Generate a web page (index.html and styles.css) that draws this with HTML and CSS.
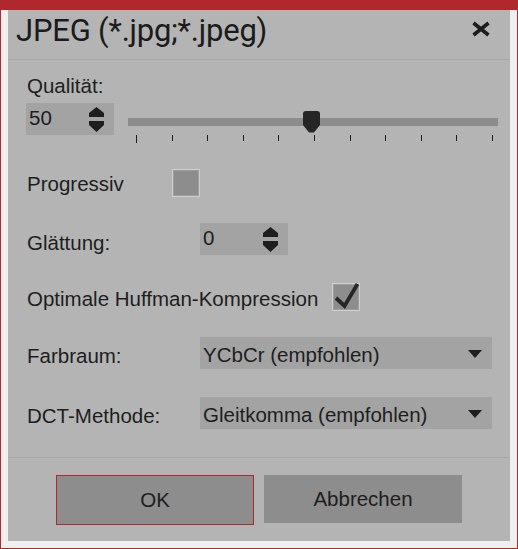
FILE: index.html
```html
<!DOCTYPE html>
<html lang="de">
<head>
<meta charset="utf-8">
<title>JPEG</title>
<link rel="stylesheet" href="styles.css">
</head>
<body>
<div class="window">
  <div class="panel">
    <div class="titlebar">
      <span class="title">JPEG (*.jpg;*.jpeg)</span>
      <svg class="close" width="20" height="16" viewBox="0 0 20 16"><path d="M2.5 2 L17.5 14 M17.5 2 L2.5 14" stroke="#1c1c1c" stroke-width="3.6" stroke-linecap="butt"/></svg>
    </div>
    <div class="content">
      <div class="label q-label">Qualität:</div>
      <div class="slider-row">
        <div class="spinner spin-q">
          <span class="value">50</span>
          <svg class="arrows" width="15" height="25" viewBox="0 0 15 25"><path d="M7.5 0 L15 6 V10 H0 V6 Z M0 14 H15 V18 L7.5 25 L0 18 Z" fill="#1e1e1e"/></svg>
        </div>
        <div class="slider">
          <div class="track"></div>
          <svg class="thumb" width="17" height="22" viewBox="0 0 17 22"><path d="M0 3 Q0 0 3 0 H14 Q17 0 17 3 V14 L11 21.5 H6 L0 14 Z" fill="#262626"/></svg>
          <div class="ticks"><i class="first"></i><i></i><i></i><i></i><i></i><i></i><i></i><i></i><i></i><i></i><i></i></div>
        </div>
      </div>
      <div class="row row-prog">
        <span class="label lw-prog">Progressiv</span>
        <span class="checkbox"></span>
      </div>
      <div class="row row-glatt">
        <span class="label lw-wide">Glättung:</span>
        <div class="spinner spin-g">
          <span class="value">0</span>
          <svg class="arrows" width="15" height="25" viewBox="0 0 15 25"><path d="M7.5 0 L15 6 V10 H0 V6 Z M0 14 H15 V18 L7.5 25 L0 18 Z" fill="#1e1e1e"/></svg>
        </div>
      </div>
      <div class="row row-huff">
        <span class="label lw-huff">Optimale Huffman-Kompression</span>
        <span class="checkbox checked"><svg class="check" width="28" height="28" viewBox="0 0 28 28"><path d="M4 15 L12.5 23 L25.5 1" fill="none" stroke="#262626" stroke-width="3.8"/></svg></span>
      </div>
      <div class="row row-farb">
        <span class="label lw-wide">Farbraum:</span>
        <div class="dropdown">
          <span class="dd-text">YCbCr (empfohlen)</span>
          <svg class="dd-arrow" width="14" height="8" viewBox="0 0 14 8"><path d="M0 0 H14 L7 8 Z" fill="#1e1e1e"/></svg>
        </div>
      </div>
      <div class="row row-dct">
        <span class="label lw-wide">DCT-Methode:</span>
        <div class="dropdown">
          <span class="dd-text">Gleitkomma (empfohlen)</span>
          <svg class="dd-arrow" width="14" height="8" viewBox="0 0 14 8"><path d="M0 0 H14 L7 8 Z" fill="#1e1e1e"/></svg>
        </div>
      </div>
    </div>
    <div class="footer">
      <button class="btn btn-ok">OK</button>
      <button class="btn btn-cancel">Abbrechen</button>
    </div>
  </div>
</div>
</body>
</html>
```
FILE: styles.css
```css
html, body {
  margin: 0;
  padding: 0;
  background: #efefef;
}

.window {
  box-sizing: border-box;
  width: 518px;
  height: 549px;
  border: 1px solid #b0282b;
  border-top: 10px solid #b0282b;
  background: #efefef;
  padding: 0 7px 7px 7px;
}

.panel {
  height: 531px;
  background: #b4b4b4;
  display: flex;
  flex-direction: column;
  font-family: "Liberation Sans", Arial, sans-serif;
  font-size: 20.5px;
  color: #1e1e1e;
}

.titlebar {
  box-sizing: border-box;
  height: 50px;
  border-bottom: 1px solid #a7a7a7;
  display: flex;
  justify-content: space-between;
  align-items: flex-start;
  padding-left: 8px;
  padding-right: 19px;
}

.title {
  font-family: Roboto, "Open Sans", sans-serif;
  font-size: 31px;
  letter-spacing: -0.2px;
  line-height: 40px;
  padding-top: 1px;
  color: #1b1b1b;
  white-space: nowrap;
}

.close {
  display: block;
  margin-top: 11px;
}

.content {
  padding-left: 19px;
  display: flex;
  flex-direction: column;
  align-items: flex-start;
}

.label {
  display: block;
  line-height: 24px;
  white-space: nowrap;
}

.q-label {
  margin-top: 14px;
}

.slider-row {
  display: flex;
  align-items: flex-start;
  margin-top: 5px;
  height: 40px;
}

.spinner {
  box-sizing: border-box;
  width: 88px;
  height: 32px;
  background: #a3a3a3;
  display: flex;
  align-items: flex-start;
  justify-content: space-between;
  padding-left: 3px;
  padding-right: 10px;
}

.spin-q {
  margin-left: -1px;
}

.spinner .value {
  line-height: 30px;
}

.spinner .arrows {
  display: block;
  margin-top: 4px;
}

.slider {
  position: relative;
  width: 370px;
  height: 40px;
  margin-left: 14px;
  display: flex;
  flex-direction: column;
}

.track {
  margin-top: 15px;
  height: 8px;
  background: #8c8c8c;
}

.thumb {
  position: absolute;
  top: 8px;
  left: 175px;
  display: block;
}

.ticks {
  margin-top: 9px;
  margin-left: 8px;
  width: 357px;
  display: flex;
  justify-content: space-between;
  align-items: flex-start;
}

.ticks i {
  display: block;
  width: 1px;
  height: 6px;
  background: #1e1e1e;
}

.ticks i.first {
  height: 8px;
}

.row {
  display: flex;
  align-items: flex-start;
}

.row-prog {
  margin-top: 26px;
}

.row-prog .label {
  padding-top: 3px;
}

.row-glatt {
  margin-top: 26px;
}

.row-glatt .label {
  padding-top: 8px;
}

.row-huff {
  margin-top: 28px;
}

.row-huff .label {
  padding-top: 4px;
}

.row-farb {
  margin-top: 26px;
}

.row-dct {
  margin-top: 28px;
}

.row-farb .label,
.row-dct .label {
  padding-top: 7px;
}

.lw-prog {
  width: 145px;
}

.lw-wide {
  width: 173px;
}

.lw-huff {
  width: 305px;
}

.checkbox {
  box-sizing: border-box;
  display: block;
  width: 28px;
  height: 28px;
  border: 1px solid #cfcfcf;
  box-shadow: inset 0 0 0 1px #9c9c9c;
  background: #8d8d8d;
  position: relative;
}

.check {
  position: absolute;
  left: -1px;
  top: -1px;
  overflow: visible;
}

.dropdown {
  box-sizing: border-box;
  width: 292px;
  height: 32px;
  background: #a3a3a3;
  display: flex;
  justify-content: space-between;
  align-items: flex-start;
  padding-left: 3px;
  padding-right: 10px;
}

.dd-text {
  padding-top: 3px;
  line-height: 29px;
  white-space: nowrap;
}

.dd-arrow {
  display: block;
  margin-top: 13px;
}

.footer {
  flex: 1;
  margin-top: 28px;
  border-top: 1px solid #a7a7a7;
  padding-top: 17px;
  display: flex;
  justify-content: center;
  align-items: flex-start;
  gap: 10px;
}

.btn {
  box-sizing: border-box;
  width: 198px;
  height: 48px;
  margin: 0;
  padding: 0;
  border: none;
  background: #8d8d8d;
  font-family: "Liberation Sans", Arial, sans-serif;
  font-size: 20.5px;
  color: #1e1e1e;
}

.btn-ok {
  height: 50px;
  border: 1px solid #b0282b;
}
```
